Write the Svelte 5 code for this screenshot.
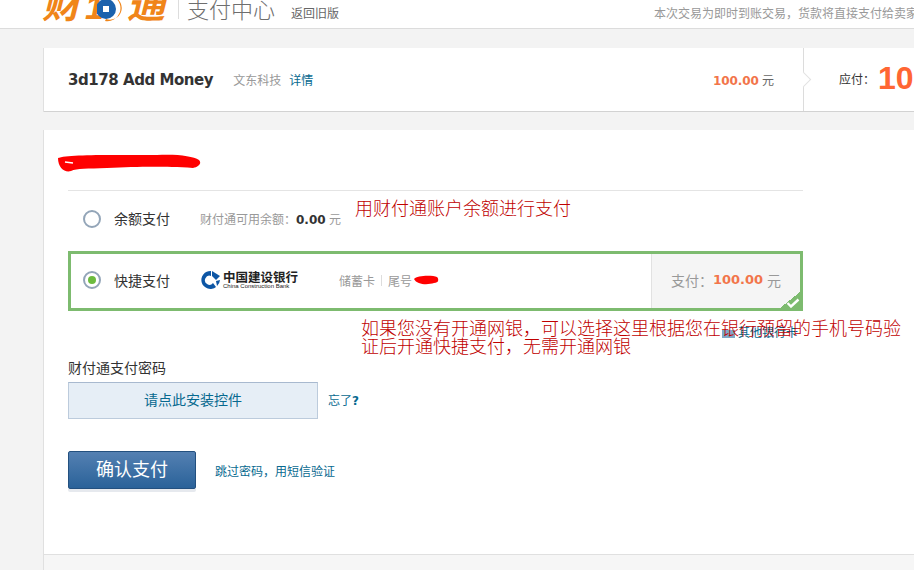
<script>
	const redNote1 = '用财付通账户余额进行支付';
	const redNote2 = '如果您没有开通网银\uFF0C可以选择这里根据您在银行预留的手机号码验证后开通快捷支付\uFF0C无需开通网银';
</script>

<div class="page">
	<header class="top">
		<div class="logo">
			<span class="logo-word">财</span>
			<span class="logo-ten">1</span>
			<svg class="coin" width="26" height="26" viewBox="0 0 26 26">
				<circle cx="9" cy="13" r="10" fill="#1c62ad" />
				<rect x="6" y="10" width="6" height="6" fill="#fff" />
				<path d="M17 1 A13 13 0 0 1 8 25 L9 23 A10 10 0 0 0 17 1Z" fill="#f08519" />
			</svg>
			<span class="logo-word tong">通</span>
		</div>
		<span class="sep"></span>
		<span class="center-name">支付中心</span>
		<a class="old" href="#old">返回旧版</a>
		<span class="notice">本次交易为即时到账交易&#xFF0C;货款将直接支付给卖家</span>
	</header>

	<section class="order">
		<div class="order-main">
			<strong class="goods">3d178 Add Money</strong>
			<span class="seller">文东科技</span>
			<a class="detail" href="#detail">详情</a>
			<span class="order-price"><b>100.00</b> 元</span>
		</div>
		<div class="order-due">
			<span class="arrow"></span>
			<span class="due-label">应付&#xFF1A;</span>
			<span class="due-value">100.00</span>
		</div>
	</section>

	<section class="pay">
		<svg class="scribble name" width="144" height="18" viewBox="0 0 144 18">
			<path d="M1 4 C10 0 60 1 100 1 C120 0 136 2 142 6 C145 9 142 13 136 14 C100 12 80 13 50 14 C30 15 20 14 14 17 C8 19 1 14 1 4Z" fill="#f00" />
			<path d="M8 8 L16 9" stroke="#fff" stroke-width="1.5" />
		</svg>

		<div class="methods">
			<div class="method first">
				<span class="radio"></span>
				<span class="method-name">余额支付</span>
				<span class="balance">财付通可用余额&#xFF1A;<b>0.00</b> 元</span>
			</div>
			<div class="method selected">
				<span class="radio on"></span>
				<span class="method-name">快捷支付</span>
				<span class="bank">
					<svg width="20" height="20" viewBox="0 0 20 20">
						<path d="M10 1 A9 9 0 1 0 15 17 L12 13 A4.5 4.5 0 1 1 10 6Z" fill="#0d56a5" />
						<path d="M11 1 L19 6 L15 10 L11 6Z" fill="#0d56a5" />
						<path d="M15 11 L19 10 A9 9 0 0 1 16 16Z" fill="#0d56a5" />
					</svg>
					<span class="bank-names">
						<span class="bank-cn">中国建设银行</span>
						<span class="bank-en">China Construction Bank</span>
					</span>
				</span>
				<span class="card-info">
					储蓄卡<i></i>尾号<span class="tail">
						<svg class="scribble" width="26" height="10" viewBox="0 0 26 10">
							<path d="M1 4 C4 0 20 0 24 2 C26 4 26 8 21 8 C15 10 4 10 1 4Z" fill="#f00" />
						</svg>
					</span>
				</span>
				<span class="method-pay">支付&#xFF1A;<b>100.00</b>元</span>
				<span class="corner">
					<svg width="14" height="10" viewBox="0 0 14 10">
						<path d="M1.5 5 L5 8.5 L12.5 1.5" fill="none" stroke="#fff" stroke-width="2.4" />
					</svg>
				</span>
			</div>
		</div>

		<div class="other-bank">
			<span class="mini-card"></span>
			<a href="#other">其他银行卡</a>
		</div>

		<div class="pwd-title">财付通支付密码</div>
		<div class="pwd-row">
			<a class="install" href="#install">请点此安装控件</a>
			<a class="forgot" href="#forgot">忘了<b>?</b></a>
		</div>

		<div class="actions">
			<button class="confirm" type="button">确认支付</button>
			<a class="sms" href="#sms">跳过密码&#xFF0C;用短信验证</a>
		</div>

		<p class="note note-one">{redNote1}</p>
		<p class="note note-two">{redNote2}</p>
	</section>
	<div class="pay-foot"></div>
</div>

<style>
	:global(body) {
		margin: 0;
		background: #f3f3f3;
	}

	.page {
		width: 914px;
		height: 570px;
		overflow: hidden;
		font-family: "Liberation Sans", "Noto Sans CJK SC", sans-serif;
		font-size: 12px;
		color: #333;
	}

	a {
		color: #07698f;
		text-decoration: none;
	}

	.top {
		height: 28px;
		background: #fff;
		border-bottom: 1px solid #dcdcdc;
		display: flex;
		align-items: flex-end;
		padding-left: 42px;
		overflow: hidden;
	}

	.logo {
		display: flex;
		align-items: flex-end;
		height: 28px;
		width: 121px;
		margin-bottom: 8px;
		color: #f08519;
		font-weight: 700;
		font-style: italic;
		flex: none;
	}

	.logo-word {
		font-size: 38px;
		line-height: 38px;
		width: 43px;
		flex: none;
		margin-bottom: -1px;
		font-family: "Noto Sans CJK SC", sans-serif;
	}

	.logo-word.tong {
		width: 36px;
		margin-left: 4px;
	}

	.logo-ten {
		font-size: 34px;
		line-height: 32px;
		width: 12px;
		margin-bottom: -3px;
		font-family: "Liberation Sans", sans-serif;
	}

	.coin {
		flex: none;
		margin-bottom: -2px;
	}

	.sep {
		width: 1px;
		height: 20px;
		background: #ddd;
		margin: 0 8px 9px 15px;
	}

	.center-name {
		font-size: 22px;
		line-height: 28px;
		font-weight: 300;
		color: #6e6e6e;
		width: 87px;
		white-space: nowrap;
		margin-bottom: 6px;
		font-family: "Noto Sans CJK SC", sans-serif;
	}

	.old {
		margin-left: 17px;
		margin-bottom: 6px;
		color: #666;
		font-size: 12px;
		line-height: 16px;
	}

	.notice {
		margin-left: auto;
		margin-bottom: 6px;
		margin-right: -80px;
		width: 340px;
		flex: none;
		white-space: nowrap;
		color: #999;
		font-size: 12px;
		line-height: 16px;
	}

	.order {
		margin: 19px 0 0 44px;
		height: 64px;
		box-sizing: border-box;
		background: #fff;
		border-bottom: 1px solid #d2d2d2;
		box-shadow: -1px 0 0 #e0e0e0;
		display: flex;
		position: relative;
	}

	.order-main {
		width: 760px;
		flex: none;
		display: flex;
		align-items: center;
		padding-left: 24px;
		box-sizing: border-box;
		border-right: 1px solid #dcdcdc;
	}

	.goods {
		font-family: "DejaVu Sans", sans-serif;
		font-size: 15px;
		letter-spacing: -0.45px;
		color: #333;
	}

	.seller {
		margin-left: 20px;
		color: #999;
	}

	.detail {
		margin-left: 8px;
	}

	.order-price {
		margin-left: auto;
		margin-right: 29px;
		font-size: 12px;
		color: #666;
	}

	.order-price b {
		color: #f2754a;
		font-size: 12px;
		letter-spacing: -0.1px;
		font-family: "DejaVu Sans", sans-serif;
	}

	.order-due {
		position: relative;
		display: flex;
		align-items: center;
		padding-left: 35px;
		white-space: nowrap;
	}

	.arrow {
		position: absolute;
		left: -6px;
		top: 26px;
		width: 10px;
		height: 10px;
		background: #fff;
		border-top: 1px solid #e2e2e2;
		border-right: 1px solid #e2e2e2;
		transform: rotate(45deg);
	}

	.due-label {
		font-size: 12px;
		color: #333;
		margin-bottom: 3px;
	}

	.due-value {
		margin-left: 3px;
		font-family: "Liberation Sans", sans-serif;
		font-size: 32px;
		font-weight: 700;
		color: #ff6633;
		margin-bottom: 3px;
	}

	.pay {
		position: relative;
		margin: 18px 0 0 44px;
		height: 425px;
		background: #fff;
		border-bottom: 1px solid #e0e0e0;
		box-shadow: -1px 0 0 #e0e0e0;
		padding: 60px 0 0 24px;
		box-sizing: border-box;
		width: 870px;
	}

	.pay-foot {
		margin-left: 44px;
		height: 20px;
		background: #f6f6f6;
		box-shadow: -1px 0 0 #e0e0e0;
	}

	.scribble {
		display: block;
	}

	.scribble.name {
		position: absolute;
		left: 13px;
		top: 24px;
	}

	.methods {
		width: 735px;
		border-top: 1px solid #e4e4e4;
	}

	.method {
		position: relative;
		display: flex;
		align-items: center;
		height: 60px;
		box-sizing: border-box;
		border: 3px solid transparent;
		padding-left: 12px;
		color: #333;
	}

	.method.first {
		height: 56px;
		margin-bottom: 4px;
	}

	.method.first .method-name,
	.method.first .balance {
		margin-bottom: 2px;
	}

	.method.selected {
		border-color: #7dbb6f;
	}

	.selected .radio,
	.selected .method-name,
	.selected .bank,
	.selected .card-info {
		margin-bottom: 2px;
	}

	.radio {
		width: 14px;
		height: 14px;
		border: 2px solid #93a5b8;
		border-radius: 50%;
		background: #fff;
		flex: none;
		position: relative;
	}

	.radio.on::after {
		content: "";
		position: absolute;
		left: 3px;
		top: 3px;
		width: 8px;
		height: 8px;
		border-radius: 50%;
		background: #6cbb3f;
	}

	.method-name {
		margin-left: 13px;
		width: 86px;
		font-size: 14px;
		flex: none;
	}

	.balance {
		color: #999;
	}

	.balance b {
		color: #333;
		font-family: "DejaVu Sans", sans-serif;
		font-size: 12px;
	}

	.bank {
		display: flex;
		align-items: center;
		gap: 2px;
		width: 138px;
		padding-left: 1px;
		flex: none;
	}

	.bank-names {
		display: flex;
		flex-direction: column;
		line-height: 1;
		color: #222;
	}

	.bank-cn {
		font-weight: 700;
		font-size: 12.5px;
		line-height: 13px;
		font-family: "Noto Sans CJK SC", sans-serif;
	}

	.bank-en {
		font-size: 6px;
		line-height: 7px;
	}

	.card-info {
		display: flex;
		align-items: center;
		color: #999;
	}

	.card-info i {
		width: 1px;
		height: 11px;
		background: #ddd;
		margin: 0 6px;
	}

	.tail {
		margin-left: 1px;
	}

	.method-pay {
		margin-left: auto;
		align-self: stretch;
		width: 149px;
		box-sizing: border-box;
		background: #f5f5f5;
		border-left: 1px solid #e2e2e2;
		padding-bottom: 3px;
		display: flex;
		align-items: center;
		justify-content: center;
		color: #999;
		font-size: 14px;
	}

	.method-pay b {
		color: #f2754a;
		font-family: "DejaVu Sans", sans-serif;
		font-size: 13px;
		margin-right: 4px;
	}

	.corner {
		position: absolute;
		right: 0;
		bottom: 0;
		width: 20px;
		height: 16px;
		background: linear-gradient(to bottom right, transparent 50%, #7dbb6f 50%);
	}

	.corner svg {
		position: absolute;
		right: 0;
		bottom: 0;
	}

	.other-bank {
		position: absolute;
		left: 678px;
		top: 193px;
		display: flex;
		align-items: center;
		gap: 3px;
		white-space: nowrap;
	}

	.mini-card {
		width: 13px;
		height: 8px;
		background: #7ea9c8;
		margin-top: 5px;
	}

	.pwd-title {
		margin-top: 48px;
		font-size: 14px;
		line-height: 18px;
		color: #333;
	}

	.pwd-row {
		display: flex;
		align-items: center;
		margin-top: 5px;
	}

	.install {
		width: 250px;
		height: 37px;
		box-sizing: border-box;
		padding-bottom: 4px;
		background: #e6eef6;
		border: 1px solid #bccbdc;
		border-top-color: #a8b9cf;
		display: flex;
		align-items: center;
		justify-content: center;
		font-size: 14px;
	}

	.forgot {
		margin-left: 10px;
		margin-bottom: 2px;
	}

	.forgot b {
		font-family: "DejaVu Sans", sans-serif;
	}

	.actions {
		display: flex;
		align-items: center;
		margin-top: 32px;
	}

	.confirm {
		width: 128px;
		height: 38px;
		padding: 0 0 4px;
		border: 1px solid #23507f;
		border-radius: 2px;
		background: linear-gradient(#5480b2, #2a6299);
		box-shadow: 0 3px 0 #e6e9ee;
		color: #fff;
		font-family: inherit;
		font-size: 18px;
	}

	.sms {
		margin-left: 19px;
	}

	.note {
		position: absolute;
		margin: 0;
		color: #c00000;
		font-size: 18px;
		line-height: 18px;
		font-family: "Noto Sans CJK SC", sans-serif;
		font-weight: 300;
	}

	.note-one {
		left: 311px;
		top: 68px;
		white-space: nowrap;
	}

	.note-two {
		left: 317px;
		top: 188px;
		width: 542px;
	}
</style>
